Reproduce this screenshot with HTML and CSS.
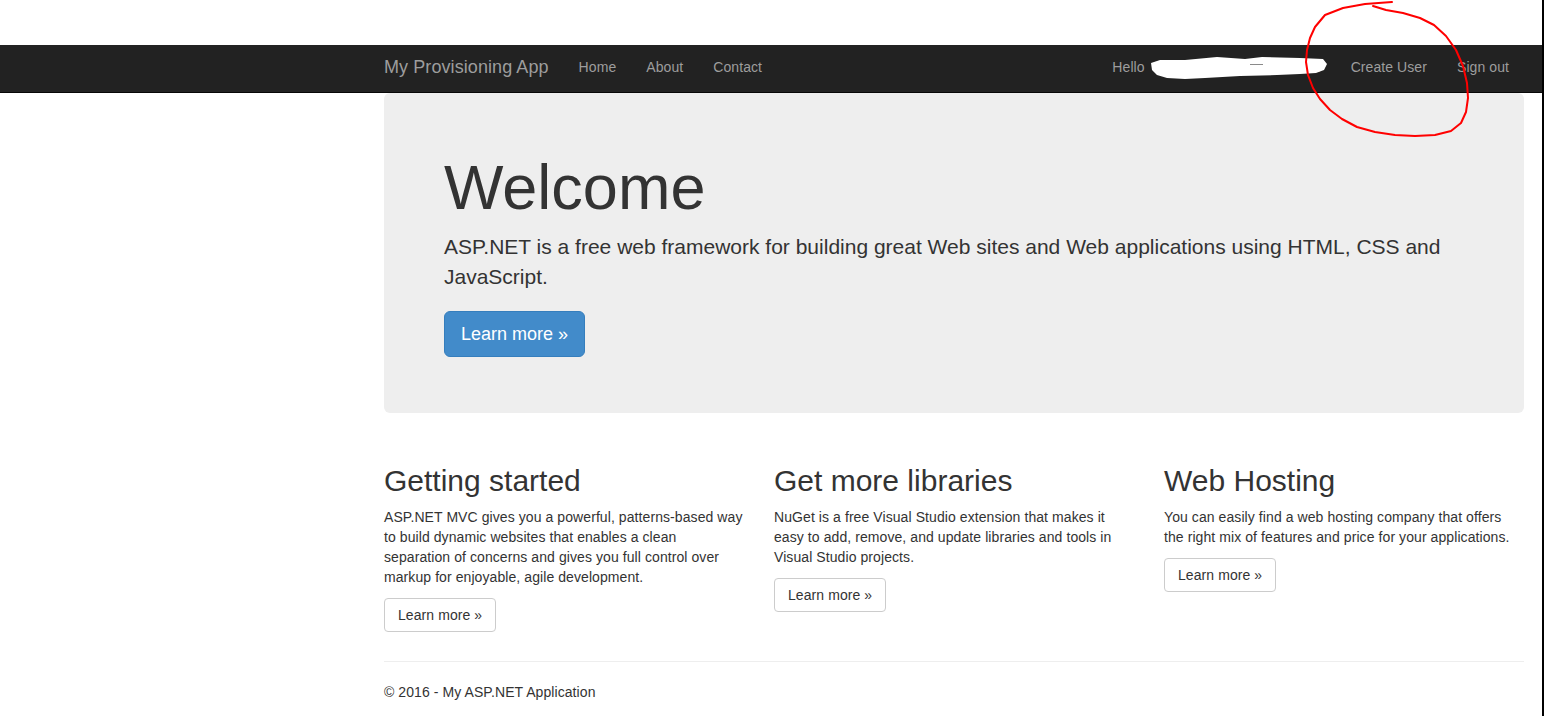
FILE: index.html
```html
<!DOCTYPE html>
<html lang="en">
<head>
    <meta charset="UTF-8">
    <meta name="viewport" content="width=device-width, initial-scale=1.0">
    <title>Home Page - My Provisioning App</title>
    <link rel="stylesheet" href="styles.css">
</head>
<body>
    <div class="page">
        <div class="navbar">
            <div class="container nav-inner">
                <div class="nav-left">
                    <a class="brand" href="#">My Provisioning App</a>
                    <ul class="nav">
                        <li><a href="#">Home</a></li>
                        <li><a href="#">About</a></li>
                        <li><a href="#">Contact</a></li>
                    </ul>
                </div>
                <ul class="nav">
                    <li><a href="#">Hello <span class="redacted"></span>!</a></li>
                    <li><a href="#">Create User</a></li>
                    <li><a href="#">Sign out</a></li>
                </ul>
            </div>
        </div>

        <div class="container body-content">
            <div class="jumbotron">
                <h1>Welcome</h1>
                <p>ASP.NET is a free web framework for building great Web sites and Web applications using HTML, CSS and JavaScript.</p>
                <div class="jumbo-action">
                    <a href="#" class="btn btn-primary">Learn more &raquo;</a>
                </div>
            </div>

            <div class="row">
                <div class="col">
                    <h2>Getting started</h2>
                    <p>ASP.NET MVC gives you a powerful, patterns-based way to build dynamic websites that enables a clean separation of concerns and gives you full control over markup for enjoyable, agile development.</p>
                    <div class="btn-row"><a class="btn" href="#">Learn more &raquo;</a></div>
                </div>
                <div class="col">
                    <h2>Get more libraries</h2>
                    <p>NuGet is a free Visual Studio extension that makes it easy to add, remove, and update libraries and tools in Visual Studio projects.</p>
                    <div class="btn-row"><a class="btn" href="#">Learn more &raquo;</a></div>
                </div>
                <div class="col">
                    <h2>Web Hosting</h2>
                    <p>You can easily find a web hosting company that offers the right mix of features and price for your applications.</p>
                    <div class="btn-row"><a class="btn" href="#">Learn more &raquo;</a></div>
                </div>
            </div>

            <hr>
            <footer>
                <p>&copy; 2016 - My ASP.NET Application</p>
            </footer>
        </div>

        <!-- hand-drawn markup on top of the page: name blanked out, circle round the new link -->
        <svg class="markup" width="1544" height="140" viewBox="0 0 1544 140">
            <path class="blot" d="M1151,63 L1160,60 L1185,60 L1217,57 L1245,59 L1262,57 L1300,58 L1323,59 L1327,64 L1324,70 L1316,73 L1300,74 L1277,75 L1240,76 L1205,78 L1185,79 L1167,78 L1157,75 L1152,70 Z"/>
            <line class="dash" x1="1250" y1="64.5" x2="1263" y2="64.5"/>
            <polyline class="ring" points="1392,2 1365,4 1343,8 1325,15 1315,27 1310,38 1307,50 1306,62 1308,75 1313,88 1320,99 1330,110 1342,119 1357,127 1375,132 1395,135 1415,136 1435,135 1451,131 1461,123 1466,112 1468,98 1467,83 1463,66 1456,50 1446,36 1434,25 1420,18 1403,13 1386,10 1373,6"/>
        </svg>
    </div>
</body>
</html>
```

FILE: styles.css
```css
* {
    box-sizing: border-box;
}

body {
    margin: 0;
    font-family: "Liberation Sans", Arial, sans-serif;
    font-size: 14px;
    line-height: 20px;
    letter-spacing: 0.08px;
    color: #333;
    background-color: #fff;
}

.page {
    position: relative;
    width: 1544px;
    min-height: 716px;
    padding-top: 45px;
    border-right: 2px solid #000;
}

.container {
    width: 1170px;
    margin-left: 369px;
    padding: 0 15px;
}

/* Top navigation */
.navbar {
    height: 48px;
    background-color: #222;
    border-bottom: 1px solid #080808;
}

.nav-inner {
    display: flex;
    justify-content: space-between;
}

.nav-left {
    display: flex;
}

.brand {
    padding: 12px 15px 15px 0;
    font-size: 18px;
    line-height: 20px;
    color: #9d9d9d;
    text-decoration: none;
}

.nav {
    display: flex;
    list-style: none;
    margin: 0;
    padding: 0;
}

.nav a {
    display: block;
    padding: 12px 15px 15px;
    line-height: 20px;
    color: #9d9d9d;
    text-decoration: none;
}

.redacted {
    display: inline-block;
    width: 168px;
}

/* Welcome panel */
.jumbotron {
    background-color: #eee;
    border-radius: 6px;
    padding: 60px 60px 56px;
    margin-bottom: 30px;
    letter-spacing: 0;
}

.jumbotron h1 {
    margin: 0 0 10px;
    font-size: 63px;
    line-height: 69px;
    font-weight: normal;
}

.jumbotron p {
    margin: 0;
    font-size: 21px;
    line-height: 30px;
    font-weight: 200;
}

.jumbo-action {
    margin-top: 19px;
}

.btn {
    display: inline-block;
    padding: 6px 13px;
    font-size: 14px;
    line-height: 20px;
    color: #333;
    background-color: #fff;
    border: 1px solid #ccc;
    border-radius: 4px;
    text-decoration: none;
}

.btn-primary {
    padding: 10px 16px;
    font-size: 18px;
    line-height: 24px;
    color: #fff;
    background-color: #428bca;
    border-color: #357ebd;
    border-radius: 6px;
}

/* Three feature columns */
.row {
    display: grid;
    grid-template-columns: repeat(3, 1fr);
    margin: 0 -15px;
}

.col {
    padding: 0 15px;
}

.col h2 {
    margin: 21px 0 10px;
    font-size: 30px;
    line-height: 33px;
    font-weight: normal;
    letter-spacing: 0;
}

.col p {
    margin: 0;
}

.btn-row {
    margin-top: 11px;
}

hr {
    height: 0;
    margin: 29px 0 20px;
    border: 0;
    border-top: 1px solid #eee;
}

footer p {
    margin: 0;
}

.markup {
    position: absolute;
    left: 0;
    top: 0;
    pointer-events: none;
}

.blot {
    fill: #fff;
}

.dash {
    stroke: #8a8a8a;
    stroke-width: 1;
}

.ring {
    fill: none;
    stroke: #f00;
    stroke-width: 2;
    stroke-linejoin: round;
    stroke-linecap: round;
}
```
